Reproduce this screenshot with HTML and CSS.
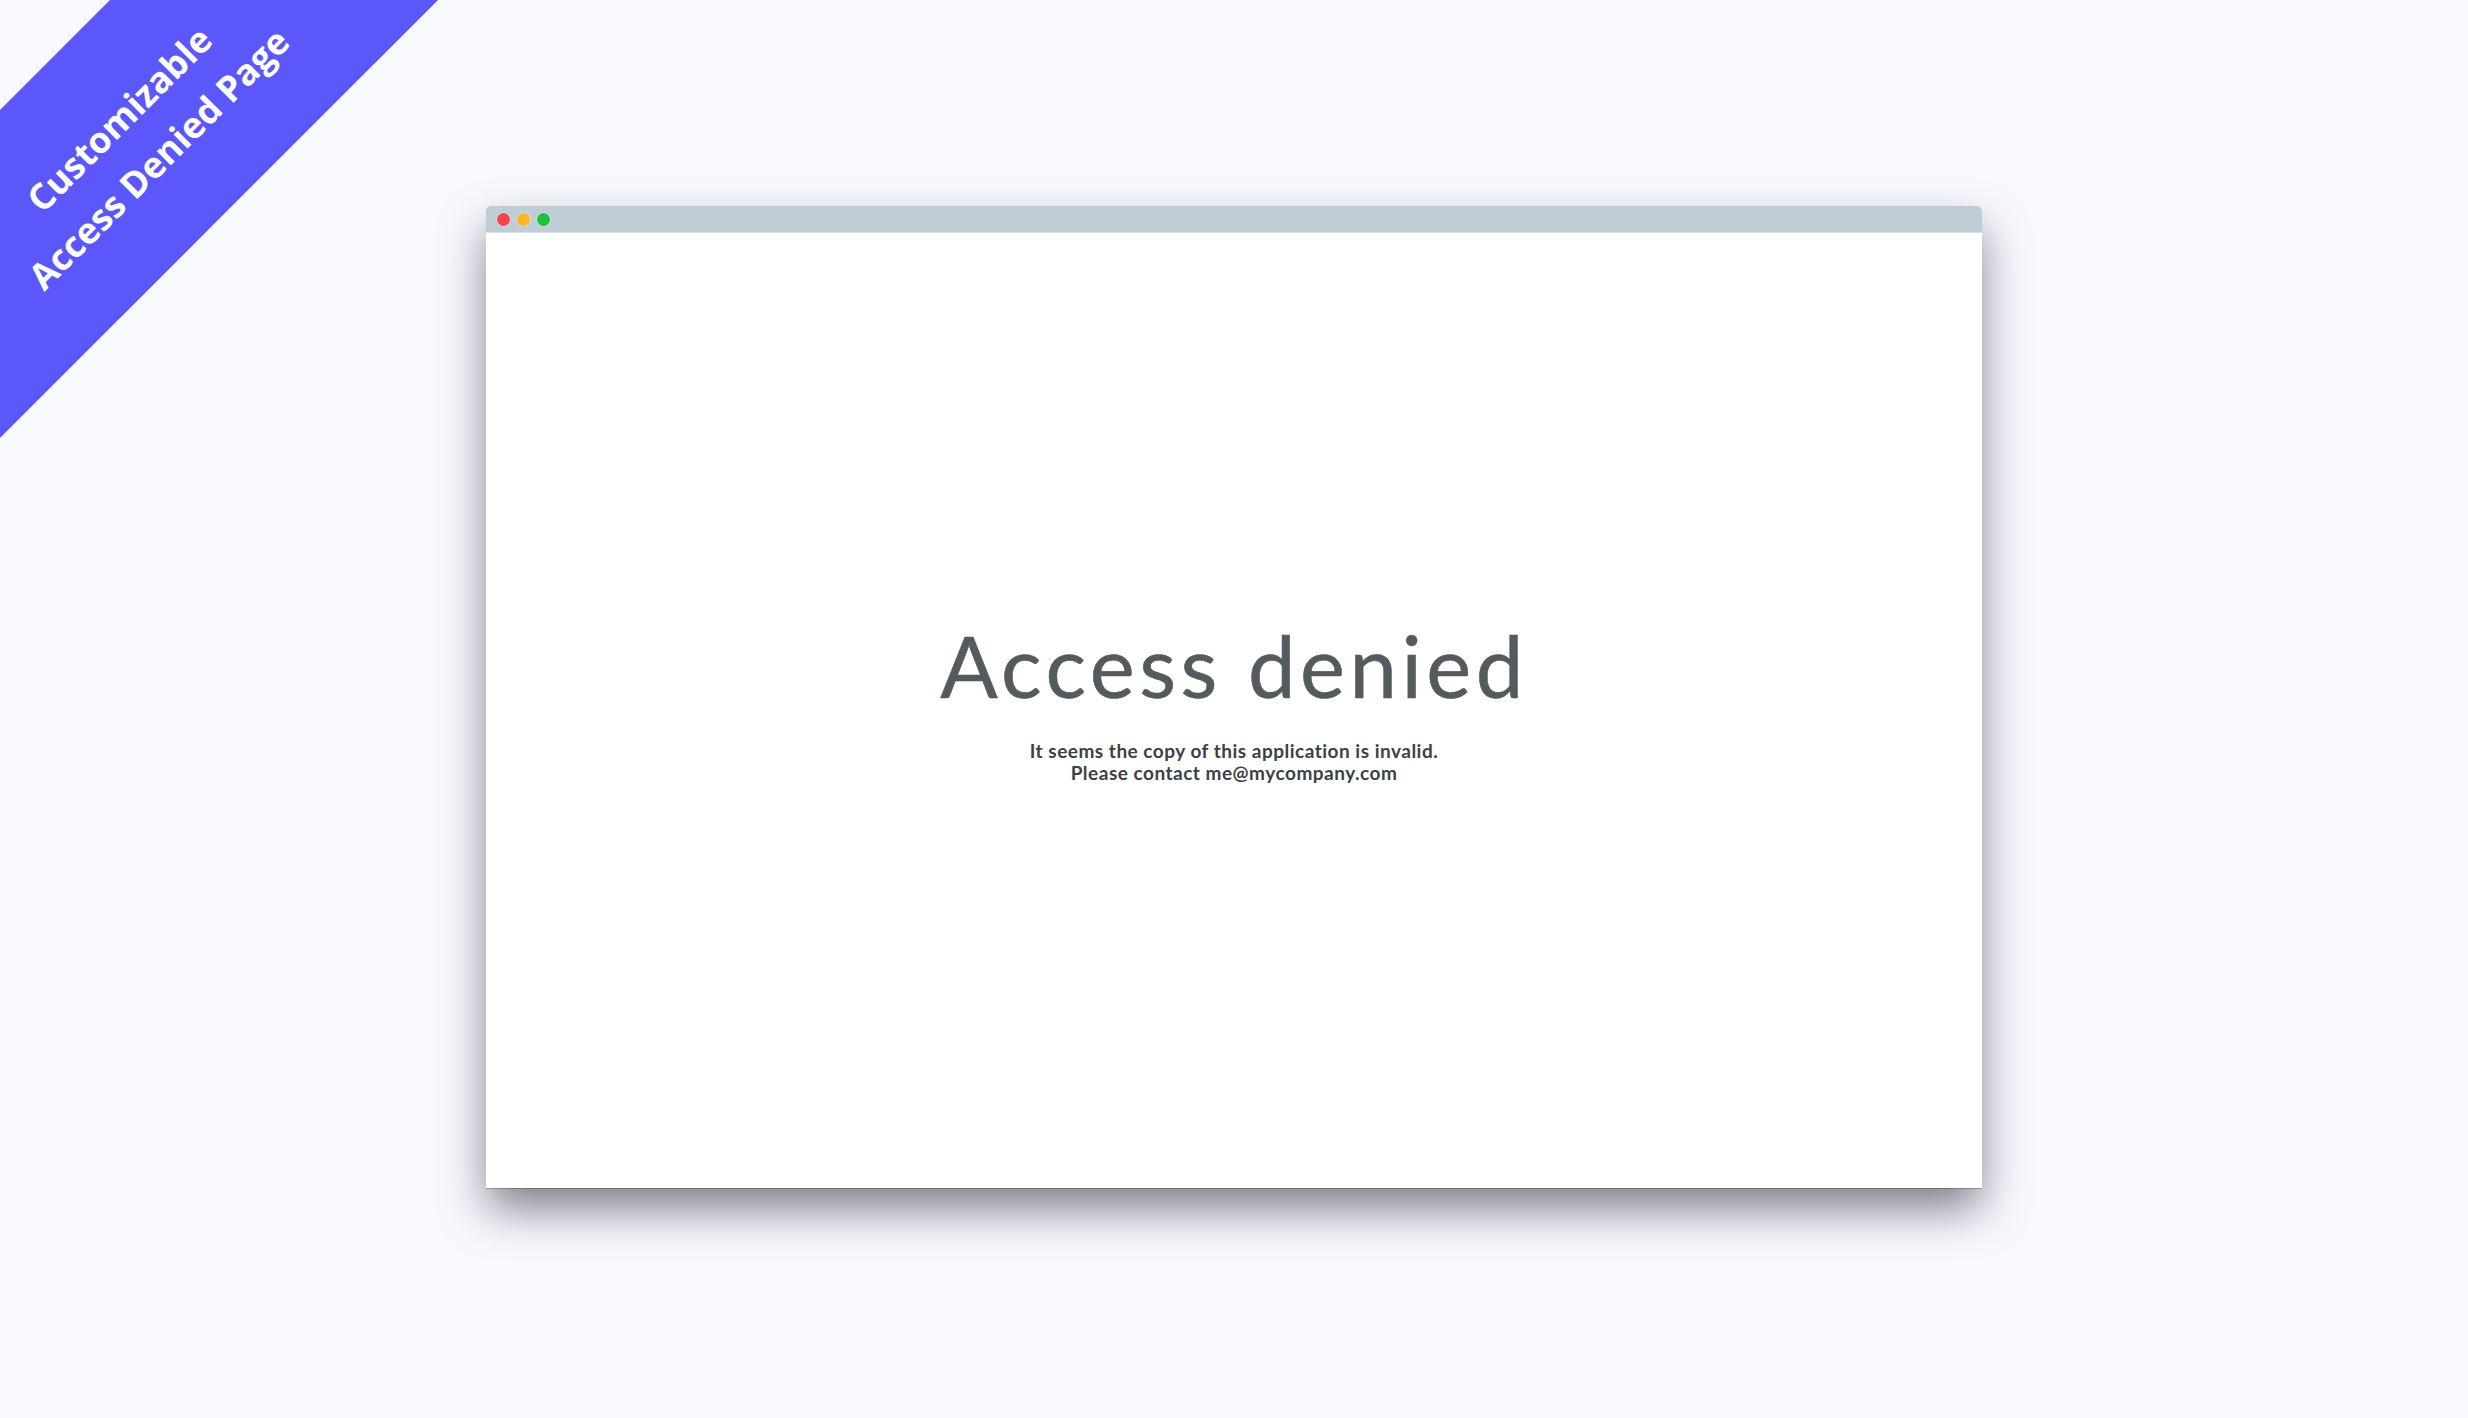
FILE: index.html
```html
<!DOCTYPE html>
<html lang="en">
<head>
    <meta charset="UTF-8">
    <meta name="viewport" content="width=device-width, initial-scale=1.0">
    <title>Access Denied Page</title>
    <link rel="stylesheet" href="styles.css">
</head>
<body>
    <div class="corner">
        <div class="ribbon">
            <span>Customizable</span>
            <span>Access Denied Page</span>
        </div>
    </div>

    <div class="window">
        <div class="titlebar">
            <span class="dot red"></span>
            <span class="dot yellow"></span>
            <span class="dot green"></span>
        </div>
        <div class="content">
            <h1 class="title">Access denied</h1>
            <p class="message">It seems the copy of this application is invalid.<br>Please contact me@mycompany.com</p>
        </div>
    </div>
</body>
</html>
```

FILE: styles.css
```css
* {
    box-sizing: border-box;
}

body {
    margin: 0;
    height: 100vh;
    background-color: #f8f9fe;
    font-family: Lato, "Noto Sans", sans-serif;
    overflow: hidden;
}

/* diagonal label in the top left corner */
.corner {
    position: absolute;
    top: 0;
    left: 0;
    width: 500px;
    height: 500px;
    overflow: hidden;
}

.ribbon {
    position: absolute;
    left: -263px;
    top: 21px;
    width: 800px;
    height: 232px;
    background-color: #5b57fa;
    transform: rotate(-45deg);
    display: flex;
    flex-direction: column;
    justify-content: center;
    align-items: center;
    color: white;
    font-family: "Open Sans", sans-serif;
    font-weight: 700;
    font-size: 36px;
    line-height: 56px;
    padding-top: 6px;
}

.window {
    width: 1496px;
    height: 982px;
    margin: 206px auto 0;
    background-color: white;
    border-radius: 5px 5px 0 0;
    display: flex;
    flex-direction: column;
    box-shadow: 0 22px 45px -2px rgba(20, 20, 40, 0.55), 0 1px 0 #bdbdc2;
}

.titlebar {
    height: 27px;
    background-color: #bfcdd6;
    border-bottom: 1px solid #d6e0e6;
    border-radius: 5px 5px 0 0;
    display: flex;
    align-items: center;
    gap: 7px;
    padding-left: 11px;
}

.dot {
    width: 13px;
    height: 13px;
    border-radius: 50%;
    box-shadow: 0 0 0 1px rgba(200, 225, 245, 0.7);
}

.red {
    background-color: #f5444a;
}

.yellow {
    background-color: #fdb524;
}

.green {
    background-color: #1ec13a;
}

.content {
    flex: 1;
    display: flex;
    flex-direction: column;
    justify-content: center;
    align-items: center;
    text-align: center;
    padding-bottom: 14px;
}

.title {
    margin: 0;
    font-size: 85px;
    font-weight: 400;
    line-height: 1;
    color: #545b5e;
    letter-spacing: 4.5px;
    -webkit-text-stroke: 0.6px #545b5e;
}

.message {
    margin: 32px 0 0;
    font-size: 19px;
    font-weight: 700;
    line-height: 22px;
    letter-spacing: 0.5px;
    color: #3a4245;
}
```
